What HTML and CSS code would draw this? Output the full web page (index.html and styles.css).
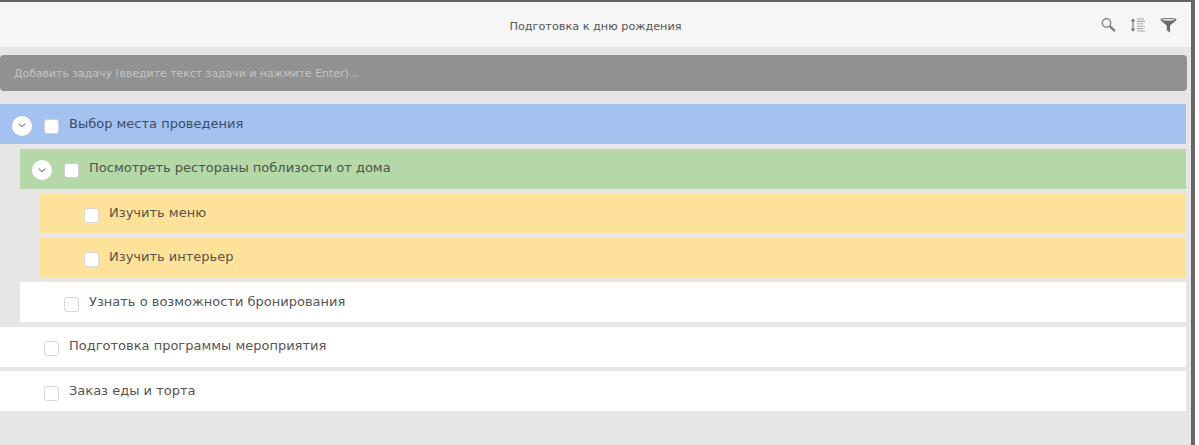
FILE: index.html

```html
<!DOCTYPE html>
<html lang="ru">
<head>
    <meta charset="UTF-8">
    <meta name="viewport" content="width=device-width, initial-scale=1.0">
    <title>Подготовка к дню рождения</title>
    <link rel="stylesheet" href="styles.css">
</head>
<body>
    <div class="app">
        <header class="header">
            <h1 class="title">Подготовка к дню рождения</h1>
            <div class="tools">
                <svg class="tool" width="16" height="16" viewBox="0 0 16 16">
                    <circle cx="6.5" cy="6" r="4.2" fill="none" stroke="#8a8a8a" stroke-width="1.5"/>
                    <path d="M9.7 9.2l5.3 5" stroke="#808080" stroke-width="2.4" fill="none"/>
                </svg>
                <svg class="tool" width="16" height="16" viewBox="0 0 16 16">
                    <path d="M3 2.5v11M1.3 4.5L3 2.2l1.7 2.3M1.3 11.5L3 13.8l1.7-2.3" stroke="#777" stroke-width="1.2" fill="none"/>
                    <path d="M7 2h7M7 4.4h8M7 6.8h6M7 9.2h8M7 11.6h6M7 14h8" stroke="#aaa" stroke-width="1.1" fill="none"/>
                </svg>
                <svg class="tool" width="17" height="16" viewBox="0 0 17 16">
                    <path d="M0.5 2.5C0.5 0.5 16.5 0.5 16.5 2.5C16.5 4 11 7 10 9v6.5l-3.2-2V9C6 7 0.5 4 0.5 2.5z" fill="#6b6b6b"/>
                    <ellipse cx="8.5" cy="2.8" rx="6" ry="1" fill="#ddd"/>
                </svg>
            </div>
        </header>

        <div class="add-task">Добавить задачу (введите текст задачи и нажмите Enter)...</div>

        <ul class="tasks">
            <li class="task blue">
                <span class="toggle"><svg width="8" height="5" viewBox="0 0 8 5"><path d="M0.7 0.7L4 3.7l3.3-3" fill="none" stroke="#888" stroke-width="1.1"/></svg></span>
                <span class="check"></span>
                <span class="name">Выбор места проведения</span>
            </li>
            <li class="task green level-1">
                <span class="toggle"><svg width="8" height="5" viewBox="0 0 8 5"><path d="M0.7 0.7L4 3.7l3.3-3" fill="none" stroke="#888" stroke-width="1.1"/></svg></span>
                <span class="check"></span>
                <span class="name">Посмотреть рестораны поблизости от дома</span>
            </li>
            <li class="task yellow level-2">
                <span class="check no-toggle"></span>
                <span class="name">Изучить меню</span>
            </li>
            <li class="task yellow level-2">
                <span class="check no-toggle"></span>
                <span class="name">Изучить интерьер</span>
            </li>
            <li class="task level-1">
                <span class="check no-toggle"></span>
                <span class="name">Узнать о возможности бронирования</span>
            </li>
            <li class="task">
                <span class="check no-toggle"></span>
                <span class="name">Подготовка программы мероприятия</span>
            </li>
            <li class="task">
                <span class="check no-toggle"></span>
                <span class="name">Заказ еды и торта</span>
            </li>
        </ul>
    </div>
</body>
</html>
```

FILE: styles.css

```css
body {
    margin: 0;
    background: #fff;
    font-family: "DejaVu Sans", sans-serif;
    overflow: hidden;
}

.app {
    width: 1191px;
    height: 443px;
    border-top: 2px solid #666;
    border-right: 4px solid #666;
    background: #e6e6e6;
}

.header {
    height: 45px;
    background: #f6f6f6;
    display: flex;
    justify-content: center;
    align-items: center;
    position: relative;
}

.title {
    margin: 4px 0 0;
    font-size: 11.25px;
    font-weight: normal;
    color: #555;
}

.tools {
    position: absolute;
    top: 15px;
    right: 14px;
    display: flex;
    gap: 14px;
}

.add-task {
    height: 36px;
    width: 1173px;
    margin: 8px 0 13px;
    padding-left: 14px;
    background: #919191;
    border-radius: 4px;
    color: #c4c4c4;
    font-size: 10.9px;
    line-height: 37px;
}

.tasks {
    list-style: none;
    margin: 0;
    padding: 0;
    width: 1186px;
    display: flex;
    flex-direction: column;
    gap: 4.5px;
}

.task {
    height: 40px;
    display: flex;
    align-items: center;
    padding-left: 12px;
    background: #fff;
    color: #555;
    font-size: 13px;
}

.task.level-1 {
    margin-left: 20px;
}

.task.level-2 {
    margin-left: 40px;
}

.blue {
    background: #a4c2f0;
    color: #3d4a66;
}

.green {
    background: #b6d7a8;
    color: #45594a;
}

.yellow {
    background: #ffe299;
    color: #55544c;
}

.toggle {
    width: 20px;
    height: 20px;
    border-radius: 50%;
    background: #fff;
    display: flex;
    justify-content: center;
    align-items: center;
    margin-right: 12px;
    margin-top: 3px;
}

.check {
    width: 13px;
    height: 13px;
    background: #fff;
    border: 1px solid #d8d8d8;
    border-radius: 3px;
    margin-top: 4px;
    margin-right: 10px;
}

.check.no-toggle {
    margin-left: 32px;
}

.blue .check,
.green .check {
    border-color: #d0d0d0;
}

.name {
    margin-top: -2px;
}
```
